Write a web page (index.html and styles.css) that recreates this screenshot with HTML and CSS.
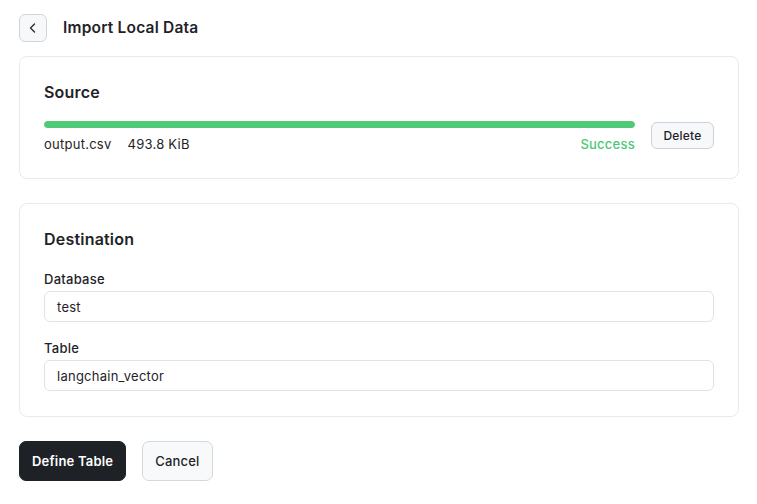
FILE: index.html
```html
<!DOCTYPE html>
<html lang="en">
<head>
<meta charset="utf-8">
<title>Import Local Data</title>
<link rel="stylesheet" href="styles.css">
</head>
<body>
<div class="page">
  <header class="header">
    <button class="back" aria-label="Back">
      <svg width="14" height="14" viewBox="0 0 14 14" fill="none" stroke="currentColor" stroke-width="1.4" stroke-linecap="round" stroke-linejoin="round"><path d="M8.5 3 L4.5 7 L8.5 11"/></svg>
    </button>
    <h1 class="title">Import Local Data</h1>
  </header>

  <section class="card">
    <h2 class="card-title">Source</h2>
    <div class="source-row">
      <div class="source-main">
        <div class="bar"><div class="bar-fill" style="width:100%"></div></div>
        <div class="meta">
          <span class="file">output.csv</span>
          <span class="size">493.8 KiB</span>
          <span class="status">Success</span>
        </div>
      </div>
      <button class="btn-small">Delete</button>
    </div>
  </section>

  <section class="card card-dest">
    <h2 class="card-title">Destination</h2>
    <div class="field field-first">
      <label class="label">Database</label>
      <div class="input">test</div>
    </div>
    <div class="field">
      <label class="label">Table</label>
      <div class="input">langchain_vector</div>
    </div>
  </section>

  <div class="actions">
    <button class="btn btn-primary">Define Table</button>
    <button class="btn btn-secondary">Cancel</button>
  </div>
</div>
</body>
</html>
```

FILE: styles.css
```css
* { box-sizing: border-box; }
html, body { margin: 0; padding: 0; background: #ffffff; }
body {
  font-family: Inter, "Noto Sans", "Liberation Sans", sans-serif;
  color: #1f2328;
  font-size: 13px;
  letter-spacing: 0.25px;
}
.page { padding: 14px 18px 0 19px; }
.header { display: flex; align-items: center; gap: 16px; height: 28px; }
.back {
  width: 28px; height: 28px; padding: 0;
  display: flex; align-items: center; justify-content: center;
  background: #f6f8fa; border: 1px solid #d0d5da; border-radius: 6px;
  color: #2a2e33;
}
.title { margin: 0; font-size: 15.5px; font-weight: 600; line-height: 20px; letter-spacing: 0.2px; }
.card {
  margin-top: 14px;
  border: 1px solid #e8ebee; border-radius: 8px;
  padding: 23px 24px 24px;
  background: #fff;
}
.card-title { margin: 0; font-size: 16px; font-weight: 600; line-height: 24px; letter-spacing: 0.2px; }
.source-row { display: flex; align-items: flex-start; gap: 16px; margin-top: 17px; }
.source-main { flex: 1; }
.bar { height: 7px; border-radius: 4px; background: #e8ebee; overflow: hidden; }
.bar-fill { height: 100%; background: #50ca79; border-radius: 4px; }
.meta { display: flex; align-items: center; margin-top: 6px; line-height: 20px; font-size: 13px; }
.size { margin-left: 16px; }
.status { margin-left: auto; color: #4cc877; font-weight: 500; }
.btn-small {
  margin-top: 1px;
  width: 63px; height: 27px; padding: 0;
  font-family: inherit; font-size: 12px; font-weight: 500; color: #1f2328; letter-spacing: 0.2px;
  background: #f6f8fa; border: 1px solid #ccd2d8; border-radius: 6px;
}
.card-dest { margin-top: 24px; padding-bottom: 25px; }
.field { margin-top: 16px; }
.field-first { margin-top: 18px; }
.label { display: block; font-size: 13px; font-weight: 500; line-height: 20px; margin-bottom: 2px; }
.input {
  height: 31px; padding: 0 12px;
  display: flex; align-items: center;
  border: 1px solid #dfe3e6; border-radius: 6px;
  font-size: 13px; color: #1f2328; background: #fff;
}
.actions { display: flex; gap: 16px; margin-top: 24px; }
.btn {
  height: 40px; padding: 0 12px;
  font-family: inherit; font-size: 13px; font-weight: 600; letter-spacing: 0.2px;
  border-radius: 7px;
}
.btn-primary { background: #1e2226; color: #fff; border: 1px solid #1e2226; }
.btn-secondary { background: #f8f9fa; color: #1f2328; border: 1px solid #d3d8dc; font-weight: 500; }
```
